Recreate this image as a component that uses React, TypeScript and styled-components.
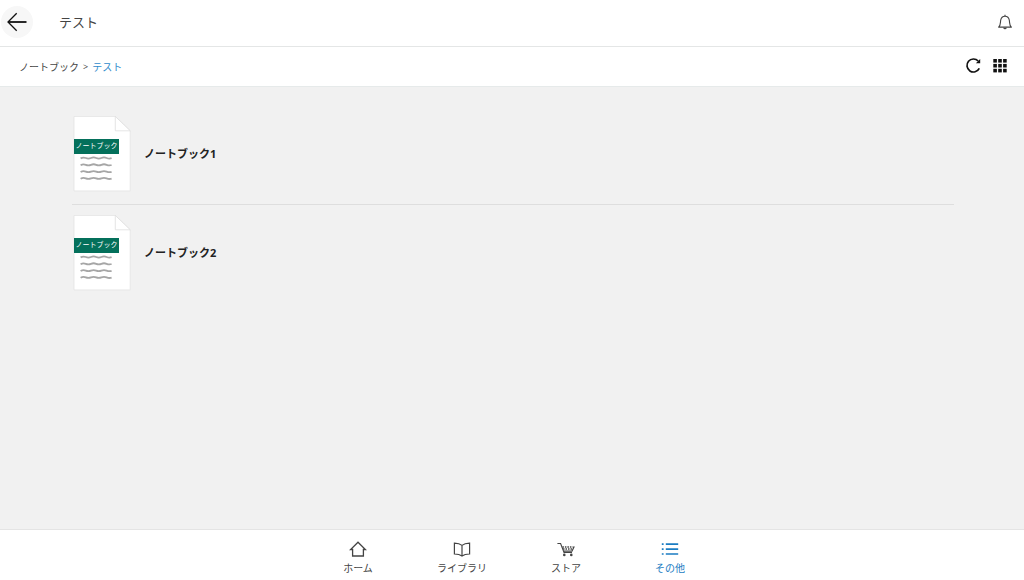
import React from "react";
import styled, { createGlobalStyle } from "styled-components";

const GlobalStyle = createGlobalStyle`
  * { box-sizing: border-box; }
  body {
    margin: 0;
    background: #f1f1f1;
    color: #444;
    font-family: "Open Sans", "Noto Sans CJK JP", sans-serif;
    font-size: 10px;
    line-height: 16px;
  }
  svg { display: block; }
`;

const Page = styled.div`
  display: flex;
  flex-direction: column;
  min-height: 100vh;
`;

const Header = styled.header`
  display: flex;
  align-items: center;
  height: 47px;
  padding: 0 9px 2px 1px;
  background: #fff;
  border-bottom: 1px solid #e4e6e6;
`;

const Title = styled.h1`
  flex: 1;
  margin: 0 0 0 26px;
  font-size: 13px;
  font-weight: 400;
  line-height: 20px;
`;

const IconButton = styled.button<{ $size: number; $round?: boolean }>`
  display: flex;
  align-items: center;
  justify-content: center;
  width: ${(p) => p.$size}px;
  height: ${(p) => p.$size}px;
  padding: 0;
  border: 0;
  border-radius: ${(p) => (p.$round ? "50%" : "0")};
  background: ${(p) => (p.$round ? "#f7f7f7" : "transparent")};
  color: #111;
  cursor: pointer;
`;

const Toolbar = styled.div`
  display: flex;
  align-items: center;
  justify-content: space-between;
  height: 40px;
  padding: 0 14px 0 19px;
  background: #fff;
  border-bottom: 1px solid #e6eaea;
`;

const Breadcrumb = styled.nav`
  display: flex;
  gap: 4px;
`;

const Crumb = styled.a<{ $current?: boolean }>`
  color: ${(p) => (p.$current ? "#2f8bcb" : "#444")};
  text-decoration: none;
`;

const Separator = styled.span`
  font-size: 9px;
`;

const Actions = styled.div`
  display: flex;
  gap: 7px;
  padding-bottom: 2px;
`;

const Main = styled.main`
  flex: 1;
  padding: 19px 70px 19px 72px;
`;

const List = styled.ul`
  margin: 0;
  padding: 0;
  list-style: none;
`;

const Item = styled.li`
  border-bottom: 1px solid #dedede;
  &:last-child { border-bottom: 0; }
`;

const ItemLink = styled.a`
  display: flex;
  align-items: center;
  gap: 13px;
  padding: 10px 0 12px 1px;
  color: #222;
  font-size: 11px;
  font-weight: 700;
  text-decoration: none;
`;

const Document = styled.span`
  position: relative;
  width: 58px;
  height: 76px;
`;

const Badge = styled.span`
  position: absolute;
  top: 23px;
  left: 1px;
  width: 45px;
  height: 15px;
  background: #04705b;
  color: #fff;
  font-size: 7px;
  font-weight: 400;
  line-height: 14px;
  text-align: center;
  white-space: nowrap;
`;

const TabBar = styled.nav`
  display: flex;
  justify-content: center;
  height: 51px;
  padding: 11px 0 0 4px;
  background: #fff;
  border-top: 1px solid #e4e4e4;
`;

const Tab = styled.a<{ $active?: boolean }>`
  display: flex;
  flex-direction: column;
  align-items: center;
  gap: 3px;
  width: 104px;
  color: ${(p) => (p.$active ? "#1b7cc2" : "#444")};
  text-decoration: none;
`;

const BackIcon = () => (
  <svg width="20" height="20" viewBox="0 0 20 20" fill="none" stroke="currentColor">
    <path d="M1 10H19.5" strokeWidth="1.8" />
    <path d="M9.7 1.3L1 10l8.7 8.7" strokeWidth="1.3" />
  </svg>
);

const BellIcon = () => (
  <svg width="16" height="16" viewBox="0 0 16 16" fill="none" stroke="#444" strokeWidth="1.1">
    <path d="M1.6 13.1C3.8 11.4 3.2 9 3.7 6.2C4.1 3.8 5.6 2.2 8 2.2s3.9 1.6 4.3 4c.5 2.8-.1 5.2 2.1 6.9z" strokeLinejoin="round" />
    <path d="M8 .8v1.4M6.8 13.6c.1 1.4 2.3 1.4 2.4 0" />
  </svg>
);

const RefreshIcon = () => (
  <svg width="16" height="16" viewBox="0 0 16 16" fill="none">
    <path d="M14.3 10.4A6.5 6.5 0 1 1 13.2 3" stroke="currentColor" strokeWidth="1.7" />
    <path d="M15.2 1V5.3H10.9z" fill="currentColor" />
  </svg>
);

const GridIcon = () => (
  <svg width="14" height="14" viewBox="0 0 14 14" fill="currentColor">
    {[0, 4.9, 9.8].flatMap((y) =>
      [0.3, 5.2, 10.1].map((x) => <rect key={`${x}-${y}`} x={x} y={y} width="3.6" height="3.6" />)
    )}
  </svg>
);

const PaperIcon = () => (
  <svg width="58" height="76" viewBox="0 0 58 76" fill="none">
    <path d="M1 .4H42.3L57.2 14.8V74.9H1z" fill="#fff" stroke="#e3e3e3" strokeWidth=".8" />
    <path d="M42.3.4V14.8H57.2z" fill="#fff" stroke="#dedede" strokeWidth=".8" />
    {[42, 48.8, 55.6, 62.4].map((y) => (
      <path
        key={y}
        d={`M7.6 ${y + 0.4}q2.6-1.5 5.2-.4t5.2 0t5.2 0t5.2 0t5.2 0t5 .2`}
        stroke="#a6a6a6"
        strokeWidth="1.8"
      />
    ))}
  </svg>
);

const HomeIcon = () => (
  <svg width="18" height="16" viewBox="0 0 18 16" fill="none" stroke="currentColor" strokeWidth="1.3">
    <path d="M3.6 8.5H1.6L9 1.2l7.4 7.3h-2V15H3.6z" />
  </svg>
);

const BookIcon = () => (
  <svg width="18" height="16" viewBox="0 0 18 16" fill="none" stroke="currentColor" strokeWidth="1.2">
    <path d="M9 4.4C7 2.8 4.5 2.3 1.4 2.2V13C4.6 13.1 7 13.6 9 15c2-1.4 4.4-1.9 7.6-2V2.2C13.5 2.3 11 2.8 9 4.4zM9 4.4V15" />
  </svg>
);

const CartIcon = () => (
  <svg width="18" height="16" viewBox="0 0 18 16" fill="none" stroke="currentColor" strokeWidth="1.1">
    <path d="M.4 2.5H3.6L7 11.5H15M15.6 6H17L15 10.1H6.5" />
    <path d="M5.4 6H15.6M6 8H15.2" strokeDasharray="1.5 1" strokeWidth="1.3" />
    <circle cx="7.3" cy="13.9" r="1.3" fill="currentColor" stroke="none" />
    <circle cx="14.3" cy="13.9" r="1.3" fill="currentColor" stroke="none" />
  </svg>
);

const MenuIcon = () => (
  <svg width="18" height="16" viewBox="0 0 18 16" stroke="currentColor" strokeWidth="1.7">
    {[3.2, 8.1, 13].map((y) => (
      <path key={y} d={`M.8 ${y}H2.6M4.8 ${y}H17.2`} />
    ))}
  </svg>
);

const notebooks = ["ノートブック1", "ノートブック2"];

const tabs = [
  { label: "ホーム", Icon: HomeIcon },
  { label: "ライブラリ", Icon: BookIcon },
  { label: "ストア", Icon: CartIcon },
  { label: "その他", Icon: MenuIcon, active: true },
];

export default function App() {
  return (
    <Page lang="ja">
      <GlobalStyle />
      <Header>
        <IconButton $size={32} $round aria-label="戻る">
          <BackIcon />
        </IconButton>
        <Title>テスト</Title>
        <IconButton $size={20} aria-label="通知">
          <BellIcon />
        </IconButton>
      </Header>
      <Toolbar>
        <Breadcrumb>
          <Crumb href="#notebooks">ノートブック</Crumb>
          <Separator>&gt;</Separator>
          <Crumb href="#test" $current aria-current="page">テスト</Crumb>
        </Breadcrumb>
        <Actions>
          <IconButton $size={20} aria-label="更新">
            <RefreshIcon />
          </IconButton>
          <IconButton $size={20} aria-label="グリッド表示">
            <GridIcon />
          </IconButton>
        </Actions>
      </Toolbar>
      <Main>
        <List>
          {notebooks.map((name) => (
            <Item key={name}>
              <ItemLink href="#notebook">
                <Document>
                  <PaperIcon />
                  <Badge>ノートブック</Badge>
                </Document>
                {name}
              </ItemLink>
            </Item>
          ))}
        </List>
      </Main>
      <TabBar>
        {tabs.map(({ label, Icon, active }) => (
          <Tab key={label} href="#tab" $active={active}>
            <Icon />
            {label}
          </Tab>
        ))}
      </TabBar>
    </Page>
  );
}
